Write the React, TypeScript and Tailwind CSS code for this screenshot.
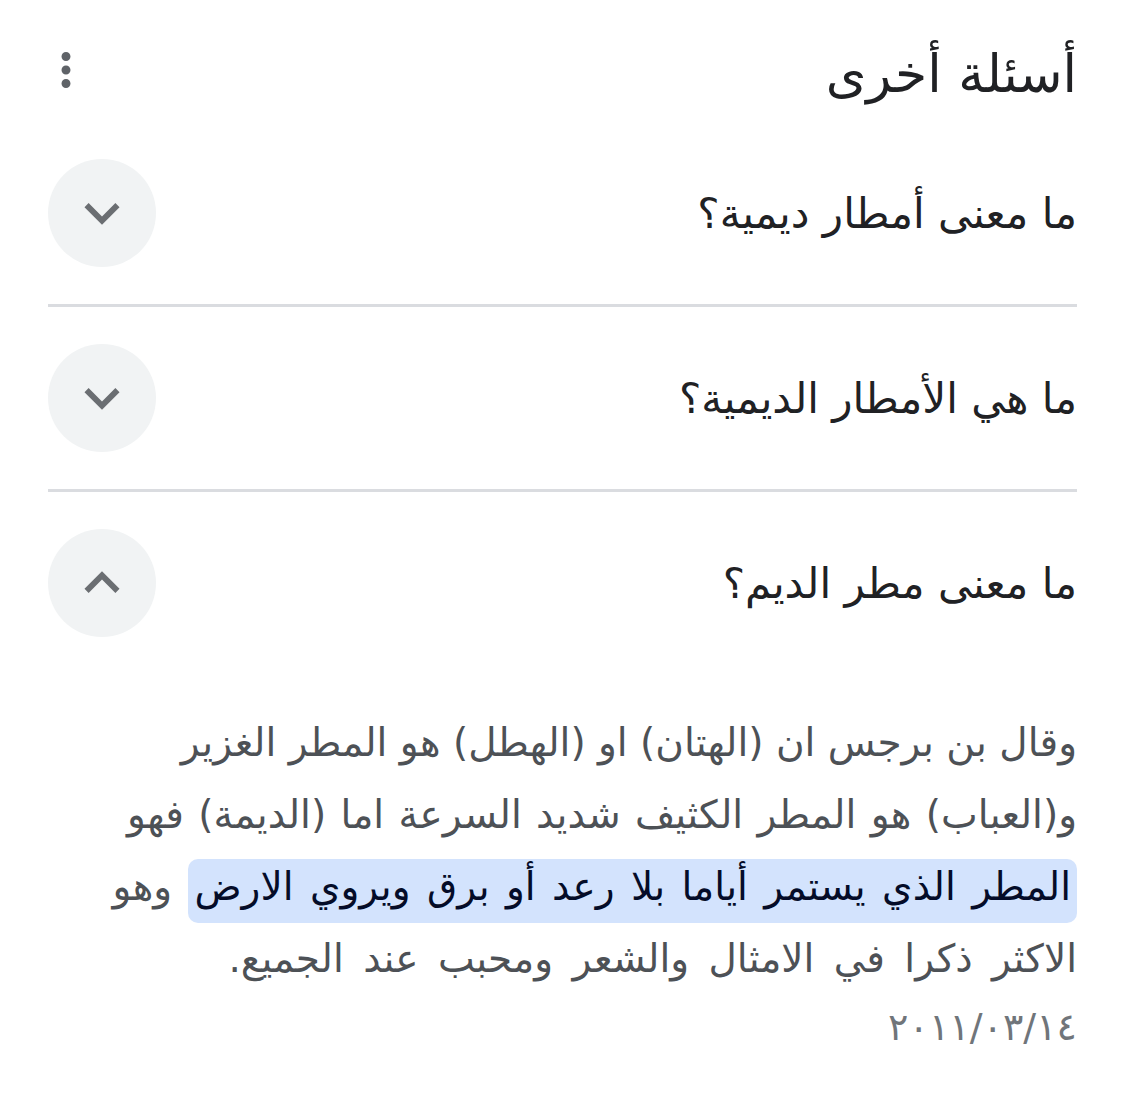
import React from 'react'

const font = { fontFamily: '"DejaVu Sans", "Noto Sans", sans-serif' }

function Chevron({ up }: { up?: boolean }) {
  return (
    <svg viewBox="0 0 24 24" className={up ? 'h-[70px] w-[70px] rotate-180' : 'h-[70px] w-[70px]'} fill="#6b6e72">
      <path d="M16.59 8.59L12 13.17 7.41 8.59 6 10l6 6 6-6z" />
    </svg>
  )
}

function Question({ text, open }: { text: string; open?: boolean }) {
  return (
    <div className="flex h-[182px] items-center justify-between">
      <span className="text-[42px] text-[#202124]">{text}</span>
      <button className="flex h-[108px] w-[108px] items-center justify-center rounded-full bg-[#f1f3f4]">
        <Chevron up={open} />
      </button>
    </div>
  )
}

export default function App() {
  return (
    <div dir="rtl" className="min-h-screen bg-white px-12" style={font}>
      {/* header */}
      <div className="flex h-[122px] items-start justify-between pt-[38px]">
        <h2 className="text-[52px] leading-[72px] text-[#202124]">أسئلة أخرى</h2>
        <button className="-ml-[9px] mt-[5px]">
          <svg viewBox="0 0 24 24" className="h-[54px] w-[54px]" fill="#5f6368">
            <path d="M12 8c1.1 0 2-.9 2-2s-.9-2-2-2-2 .9-2 2 .9 2 2 2zm0 2c-1.1 0-2 .9-2 2s.9 2 2 2 2-.9 2-2-.9-2-2-2zm0 6c-1.1 0-2 .9-2 2s.9 2 2 2 2-.9 2-2-.9-2-2-2z" />
          </svg>
        </button>
      </div>

      <Question text="ما معنى أمطار ديمية؟" />
      <div className="h-[3px] bg-[#dadce0]" />
      <Question text="ما هي الأمطار الديمية؟" />
      <div className="h-[3px] bg-[#dadce0]" />
      <Question text="ما معنى مطر الديم؟" open />

      {/* answer */}
      <div className="pt-[33px] text-[39px] leading-[72px] text-[#4d5156]">
        <div className="whitespace-nowrap">وقال بن برجس ان (الهتان) او (الهطل) هو المطر الغزير</div>
        <div className="whitespace-nowrap [word-spacing:2px]">و(العباب) هو المطر الكثيف شديد السرعة اما (الديمة) فهو</div>
        <div className="whitespace-nowrap [word-spacing:4px]">
          <span className="rounded-[10px] bg-[#d3e3fd] px-[6px] pt-[5px] pb-[14px] text-[#040c28]">
            المطر الذي يستمر أياما بلا رعد أو برق ويروي الارض
          </span>{' '}
          وهو
        </div>
        <div className="whitespace-nowrap [word-spacing:7px]">الاكثر ذكرا في الامثال والشعر ومحبب عند الجميع.</div>
        <div className="text-[38px] leading-[64px] text-[#70757a]">
          <span dir="ltr">٢٠١١/٠٣/١٤</span>
        </div>
      </div>
    </div>
  )
}
